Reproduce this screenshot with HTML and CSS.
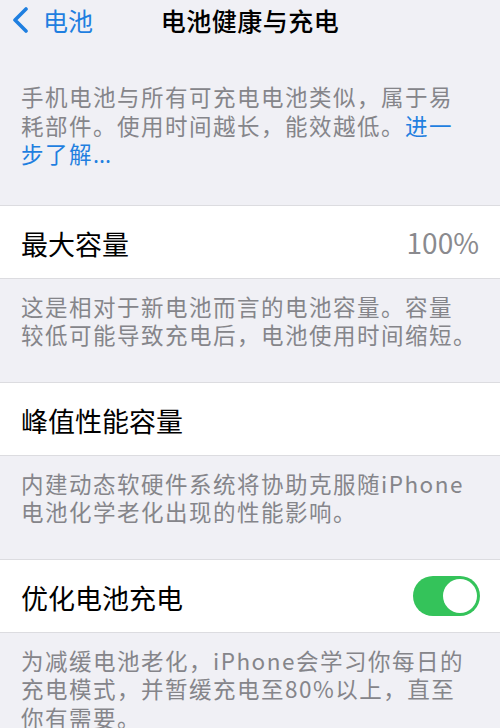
FILE: index.html
```html
<!DOCTYPE html>
<html lang="zh-CN">
<head>
    <meta charset="UTF-8">
    <meta name="viewport" content="width=device-width, initial-scale=1.0">
    <title>电池健康与充电</title>
    <link rel="stylesheet" href="styles.css">
</head>
<body>
    <div class="nav">
        <a class="nav-back" href="#">
            <svg class="chevron" width="20" height="26" viewBox="0 0 20 26">
                <path d="M16 2 L5 13 L16 24" fill="none" stroke="#1f7fe0" stroke-width="3.6" stroke-linecap="round" stroke-linejoin="round"/>
            </svg>
            <span>电池</span>
        </a>
        <div class="nav-title">电池健康与充电</div>
        <div></div>
    </div>

    <p class="intro">手机电池与所有可充电电池类似，属于易耗部件。使用时间越长，能效越低。<a href="#">进一步了解<span class="dots">...</span></a></p>

    <div class="group">
        <div class="row">
            <span class="row-label">最大容量</span>
            <span class="row-value">100%</span>
        </div>
    </div>
    <p class="footer">这是相对于新电池而言的电池容量。容量较低可能导致充电后，电池使用时间缩短<span class="hang">。</span></p>

    <div class="group">
        <div class="row">
            <span class="row-label">峰值性能容量</span>
        </div>
    </div>
    <p class="footer">内建动态软硬件系统将协助克服随iPhone电池化学老化出现的性能影响。</p>

    <div class="group">
        <div class="row">
            <span class="row-label">优化电池充电</span>
            <span class="switch on"><span class="knob"></span></span>
        </div>
    </div>
    <p class="footer">为减缓电池老化，iPhone会学习你每日的充电模式，并暂缓充电至80%以上，直至你有需要。</p>
</body>
</html>
```

FILE: styles.css
```css
body {
    margin: 0;
    background-color: #f0f0f5;
    font-family: "Noto Sans CJK SC", "Noto Sans", sans-serif;
    color: #000;
    overflow: hidden;
}

/* top navigation bar */
.nav {
    display: grid;
    grid-template-columns: 1fr auto 1fr;
    align-items: center;
    height: 40px;
}

.nav-back {
    display: flex;
    align-items: center;
    gap: 13px;
    padding-left: 10px;
    color: #1f7fe0;
    text-decoration: none;
    font-size: 25px;
}

.nav-title {
    font-size: 25px;
    font-weight: 500;
    letter-spacing: 0.5px;
}

.intro,
.footer {
    margin: 0;
    padding: 0 34px 0 21px;
    font-size: 22.5px;
    letter-spacing: 1.5px;
    line-height: 28.5px;
    color: #85858a;
}

.intro {
    margin-top: 42px;
    margin-bottom: 35px;
}

.intro a {
    color: #1f7fe0;
    text-decoration: none;
}

.dots {
    font-family: "Noto Sans", sans-serif;
    letter-spacing: 0;
}

/* closing full stop may hang past the right edge */
.hang {
    display: inline-block;
    width: 0;
    white-space: nowrap;
}

.footer {
    padding-top: 13px;
    padding-bottom: 33px;
}

/* white grouped rows */
.group {
    background: #fff;
    border-top: 1px solid #dcdce0;
    border-bottom: 1px solid #dcdce0;
}

.row {
    display: flex;
    align-items: center;
    justify-content: space-between;
    height: 72px;
    padding: 0 21px;
}

.row-label {
    font-size: 27px;
    padding-top: 3px;
}

.row-value {
    font-size: 28px;
    color: #8a8a8e;
    padding-top: 1px;
}

/* toggle switch */
.switch {
    position: relative;
    width: 67px;
    height: 40px;
    border-radius: 20px;
    background: #ccc;
    margin-right: -1px;
}

.switch.on {
    background: #34c35a;
}

.switch .knob {
    position: absolute;
    top: 3px;
    left: 3px;
    width: 34px;
    height: 34px;
    border-radius: 50%;
    background: #fff;
}

.switch.on .knob {
    left: 30px;
}
```
